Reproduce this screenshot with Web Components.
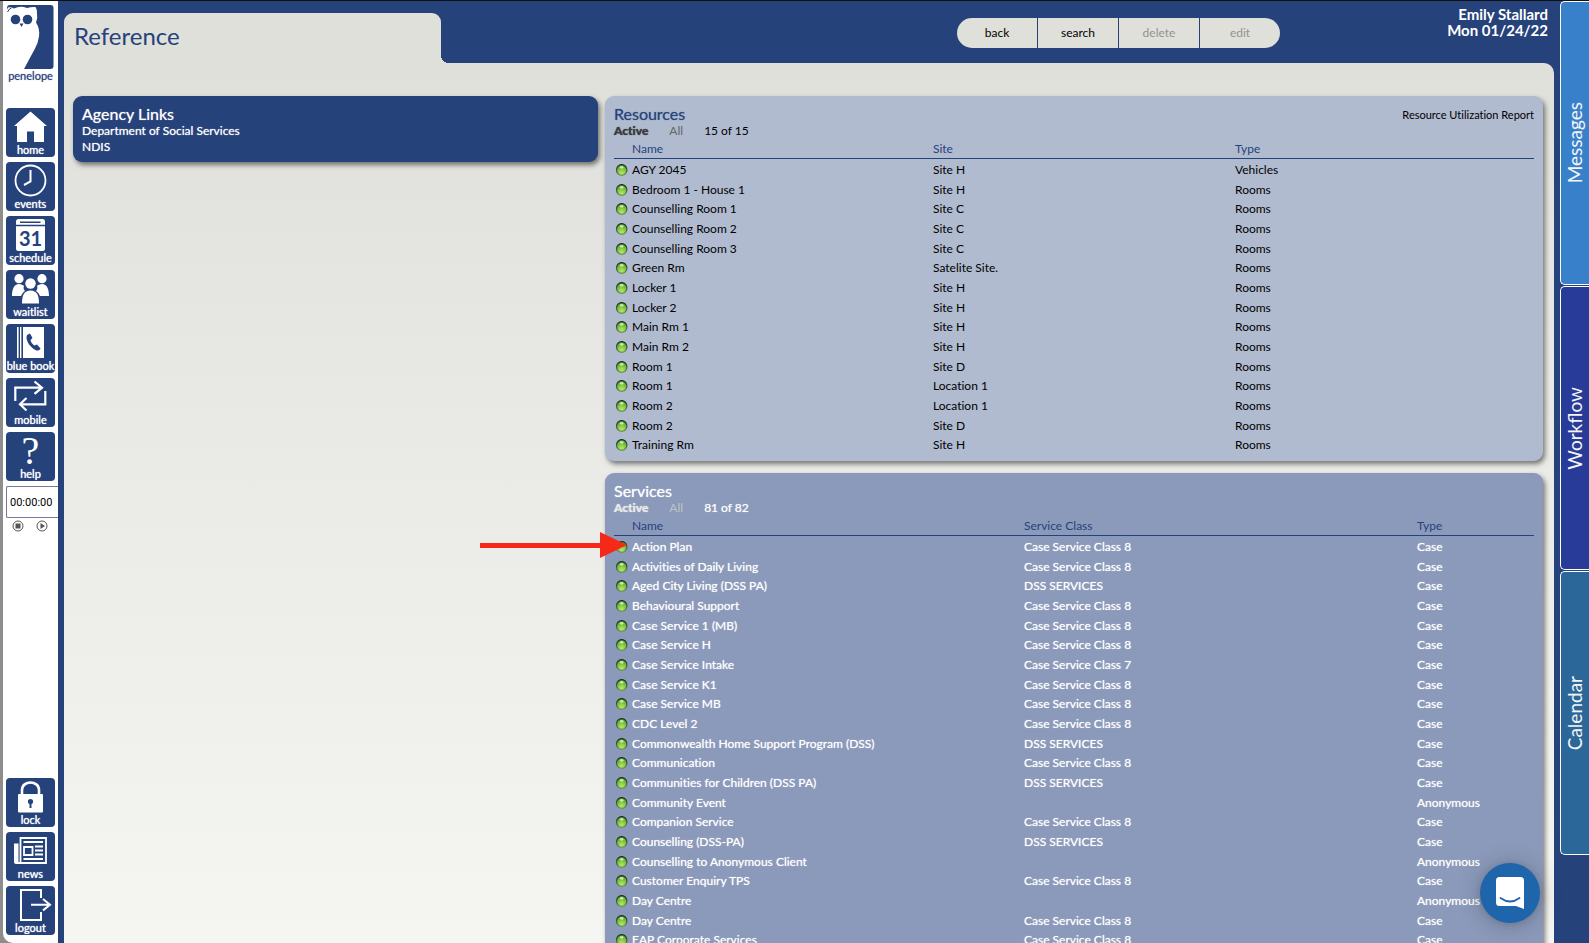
<!DOCTYPE html>
<html lang="en">
<head>
<meta charset="utf-8">
<title>Penelope - Reference</title>
<style>
  html, body { margin: 0; height: 100%; }
  body { overflow: hidden; background: #26427a; font-family: Lato, "Liberation Sans", sans-serif; font-size: 12px; line-height: 16px; color: #000; font-variant-ligatures: none; }
</style>
</head>
<body>
<penelope-app></penelope-app>

<script>
const define = (name, html, setup) => {
  const template = document.createElement('template');
  template.innerHTML = html;
  customElements.define(name, class extends HTMLElement {
    connectedCallback() {
      if (this.shadowRoot) return;
      this.attachShadow({ mode: 'open' }).append(template.content.cloneNode(true));
      if (setup) setup(this, this.shadowRoot);
    }
  });
};

const icons = {
  home: '<path fill="#fff" d="M24.5 3.5 41 18h-3v16H28V23.500h-7V34H11V18H8z"/>',
  events: '<circle cx="24.500" cy="18.500" r="15" fill="none" stroke="#fff" stroke-width="1.800"/><path fill="none" stroke="#fff" stroke-width="2" d="M24.500 8v11.500L18 23"/>',
  schedule: '<rect x="10" y="3" width="29" height="32" rx="2.500" fill="#fff"/><path stroke="#26427a" stroke-width="1.600" d="M14 6.300h20.500M10 9.500h29"/><text x="24.500" y="30" text-anchor="middle" font-size="20" font-weight="700" fill="#26427a">31</text>',
  waitlist: '<g fill="#fff"><circle cx="13" cy="8.700" r="4.600"/><circle cx="36" cy="8.700" r="4.600"/><path d="M6 26c0-7 2-12 7-12 2 0 4 1 5 2-1 2 0 4 1 5-2 1-3 3-4 5zM43 26c0-7-2-12-7-12-2 0-4 1-5 2 1 2 0 4-1 5 2 1 3 3 4 5z"/><circle cx="24.500" cy="13.500" r="5.200"/><path d="M16 33.500c0-8 2-13 8.500-13s8.500 5 8.500 13z"/></g>',
  book: '<g fill="#fff"><path d="M11 3h1.600v31H11zM14 3h1.400v31H14zM17 3h21v31H17z"/></g><path fill="#26427a" d="m21 11 3-1.500 2.500 4.500-2 2c.5 2.500 2 4.500 4 5.500l2.500-1 3.500 4c-1 2-3 2.700-5 1.500-5-2.500-9-8-9-13z"/>',
  mobile: '<path fill="none" stroke="#fff" stroke-width="2.200" d="M9.300 23V9.700H36M28.500 3.500l7.500 6.200-7.500 6.200M39.300 13v13.300H14M20.500 20 14 26.300l6.500 6.200"/>',
  help: '<text x="24.500" y="32" text-anchor="middle" font-family="Liberation Serif, serif" font-size="40" fill="#fff">?</text>',
  lock: '<path fill="none" stroke="#fff" stroke-width="2.600" d="M16 17v-5c0-10 17-10 17 0v5"/><rect x="12" y="16" width="25" height="18.500" rx="1" fill="#fff"/><circle cx="24.500" cy="23.500" r="2.600" fill="#26427a"/><path fill="#26427a" d="M23.500 24h2v6h-2z"/>',
  news: '<path fill="none" stroke="#fff" stroke-width="1.800" d="M14.500 6h25.500v25H14.500z"/><path fill="#fff" d="M8 11.500h4.500V32H10q-2 0-2-2zM10 30h30v2H10z"/><path fill="none" stroke="#fff" stroke-width="1.800" d="M17.500 10h19.500M29 14.500h8M29 18.500h8M29 22.500h8M17.500 27h19.500M18 15h8.500v8H18z"/>',
  logout: '<path fill="none" stroke="#fff" stroke-width="2" d="M35 12V4H15v30h20v-8M25 18.700h18M37 13l7 5.700-7 5.700"/>'
};

/* One square button of the left rail. */
define('nav-tile', `
<style>
  :host { display: block; }
  button { display: grid; width: 49px; height: 49px; padding: 0; border: 0; border-radius: 4px; background: #26427a; color: #fff; font: 11px/14px Lato, sans-serif; }
  svg, span { grid-area: 1 / 1; }
  svg { width: 49px; height: 49px; }
  span { align-self: end; justify-self: center; white-space: nowrap; text-shadow: 0 0 1px #fff; }
</style>
<button type="button"><svg viewBox="0 0 49 49" aria-hidden="true"></svg><span><slot></slot></span></button>`,
(host, root) => { root.querySelector('svg').innerHTML = icons[host.getAttribute('icon')]; });

define('side-rail', `
<style>
  :host { display: flex; flex-direction: column; box-sizing: border-box; width: 55px; padding: 4px 0 8px 3px; gap: 5px; background: #fff; border-radius: 0 0 0 10px; }
  .logo { height: 98px; color: #26427a; text-align: center; line-height: 14px; font-size: 11px; text-shadow: 0 0 1px rgba(38,66,122,.6); }
  .logo svg { display: block; width: 49px; height: 64px; }
  .logo a { display: block; width: 49px; color: inherit; text-decoration: none; }
  .timer { margin-bottom: auto; }
  input { display: block; box-sizing: border-box; width: 52px; height: 32px; padding: 0 0 0 3px; border: 1px solid #77779a; border-right: 0; border-radius: 2px 0 0 2px; font: 11px/16px Roboto, sans-serif; color: #000; background: #fff; }
  .keys { display: flex; gap: 12px; padding: 2px 6px; }
  .keys button { width: 12px; height: 12px; padding: 0; border: 0; background: none; }
  .keys svg { display: block; width: 12px; height: 12px; }
</style>
<div class="logo"><a href="#">
  <svg viewBox="0 0 49 64" aria-hidden="true">
    <rect x="1" width="46.500" height="64" rx="3" fill="#26427a"/>
    <path fill="#fff" d="M0 7 2 2.500q3-.8 6 1 6-3 13-.5 5-1.500 8.500-1 2 3 1.500 6.500 1 5-1 9 4 6 3 14-1 7-4 12L18 64H0z"/>
    <circle cx="9.500" cy="14.500" r="4.800" fill="#26427a"/><circle cx="21.500" cy="14.500" r="4.800" fill="#26427a"/>
    <path fill="#26427a" d="M13.500 18.500h4l-2 3.500z"/>
    <path fill="none" stroke="#26427a" d="M1.500 7q2-4 4-4"/>
  </svg>penelope</a></div>
<nav-tile icon="home">home</nav-tile>
<nav-tile icon="events">events</nav-tile>
<nav-tile icon="schedule">schedule</nav-tile>
<nav-tile icon="waitlist">waitlist</nav-tile>
<nav-tile icon="book">blue book</nav-tile>
<nav-tile icon="mobile">mobile</nav-tile>
<nav-tile icon="help">help</nav-tile>
<div class="timer">
  <input type="text" value="00:00:00" aria-label="Timer">
  <div class="keys">
    <button type="button" aria-label="Stop"><svg viewBox="0 0 12 12"><circle cx="6" cy="6" r="5" fill="none" stroke="#555"/><path fill="#555" d="M3.500 3.500h5v5h-5z"/></svg></button>
    <button type="button" aria-label="Start"><svg viewBox="0 0 12 12"><circle cx="6" cy="6" r="5" fill="none" stroke="#555"/><path fill="#555" d="m4.500 3 4.500 3-4.500 3z"/></svg></button>
  </div>
</div>
<nav-tile icon="lock">lock</nav-tile>
<nav-tile icon="news">news</nav-tile>
<nav-tile icon="logout">logout</nav-tile>`);

define('page-header', `
<style>
  :host { display: flex; height: 62px; color: #fff; }
  .tab { position: relative; box-sizing: border-box; flex: 0 0 377px; margin-top: 12px; padding: 7px 10px; background: #dfe0da; border-radius: 9px 9px 0 0; }
  .tab::after { content: ""; position: absolute; left: 100%; bottom: 0; width: 8px; height: 8px; background: radial-gradient(circle at 100% 0, #26427a 8px, #dfe0da 8px); }
  h1 { margin: 0; color: #26427a; font-weight: 400; font-size: 24px; line-height: 32px; }
  .actions { display: flex; gap: 1px; margin: 17px 0 0 auto; height: 30px; border-radius: 15px; overflow: hidden; }
  button { width: 80px; padding: 0; border: 0; background: #dfe0da; color: #000; font: 12px/16px Lato, sans-serif; }
  button:disabled { color: #92938f; }
  .user { flex: 0 0 268px; padding: 5px 0; text-align: right; font-size: 15px; line-height: 16px; font-weight: 700; margin-right: 6px; }
</style>
<div class="tab"><h1>Reference</h1></div>
<div class="actions">
  <button type="button">back</button><button type="button">search</button><button type="button" disabled>delete</button><button type="button" disabled>edit</button>
</div>
<div class="user">Emily Stallard<br>Mon 01/24/22</div>`);

/* Rounded panel with a heading, an optional link on the right, and its content. */
define('info-card', `
<style>
  :host { display: block; box-sizing: border-box; padding: 9px 9px 7px; border-radius: 9px; background: #26427a; color: #fff; box-shadow: 2px 3px 5px rgba(0,0,0,.5); text-shadow: 0 0 1px rgba(255,255,255,.7); }
  :host([tone="light"]) { background: #b0bbd0; color: #000; padding-bottom: 6px; text-shadow: none; }
  :host([tone="mid"]) { background: #8b9aba; }
  header { display: flex; justify-content: space-between; align-items: flex-end; line-height: 16px; font-size: 11px; }
  h2 { margin: 0; font-size: 16px; line-height: 18px; font-weight: 400; }
  :host([tone="light"]) h2 { color: #26427a; text-shadow: 0 0 1px rgba(38,66,122,.6); }
</style>
<header><h2><slot name="title"></slot></h2><slot name="aside"></slot></header>
<slot></slot>`);

define('link-list', `
<style>
  ul { margin: 0; padding: 0; list-style: none; }
  a { color: inherit; text-decoration: none; }
</style>
<ul><li><a href="#">Department of Social Services</a></li><li><a href="#">NDIS</a></li></ul>`);

define('status-dot', `
<style>
  :host { display: block; width: 12px; height: 12px; }
  svg { display: block; }
</style>
<svg width="12" height="12" viewBox="0 0 12 12" role="img" aria-label="Active">
  <defs><radialGradient id="g" cx=".5" cy=".8" r=".7"><stop offset="0" stop-color="#b4ec5e"/><stop offset=".6" stop-color="#7cc440"/><stop offset="1" stop-color="#4f9a2e"/></radialGradient>
  <linearGradient id="r" x2="0" y2="1"><stop offset="0" stop-color="#152611"/><stop offset="1" stop-color="#6f8d68"/></linearGradient></defs>
  <ellipse cx="5.700" cy="6" rx="5.200" ry="5.400" fill="url(#g)" stroke="url(#r)" stroke-width="1.200"/>
  <ellipse cx="5.700" cy="3.300" rx="1.800" ry="1.400" fill="#e0f7c8" opacity=".8"/>
</svg>`);

const data = {
  resources: {
    count: '15 of 15', head: ['Name', 'Site', 'Type'], widths: ['301px', '302px', 'auto'],
    rows: `AGY 2045|Site H|Vehicles
Bedroom 1 - House 1|Site H|Rooms
Counselling Room 1|Site C|Rooms
Counselling Room 2|Site C|Rooms
Counselling Room 3|Site C|Rooms
Green Rm|Satelite Site.|Rooms
Locker 1|Site H|Rooms
Locker 2|Site H|Rooms
Main Rm 1|Site H|Rooms
Main Rm 2|Site H|Rooms
Room 1|Site D|Rooms
Room 1|Location 1|Rooms
Room 2|Location 1|Rooms
Room 2|Site D|Rooms
Training Rm|Site H|Rooms`
  },
  services: {
    count: '81 of 82', head: ['Name', 'Service Class', 'Type'], widths: ['392px', '393px', 'auto'],
    rows: `Action Plan|Case Service Class 8|Case
Activities of Daily Living|Case Service Class 8|Case
Aged City Living (DSS PA)|DSS SERVICES|Case
Behavioural Support|Case Service Class 8|Case
Case Service 1 (MB)|Case Service Class 8|Case
Case Service H|Case Service Class 8|Case
Case Service Intake|Case Service Class 7|Case
Case Service K1|Case Service Class 8|Case
Case Service MB|Case Service Class 8|Case
CDC Level 2|Case Service Class 8|Case
Commonwealth Home Support Program (DSS)|DSS SERVICES|Case
Communication|Case Service Class 8|Case
Communities for Children (DSS PA)|DSS SERVICES|Case
Community Event||Anonymous
Companion Service|Case Service Class 8|Case
Counselling (DSS-PA)|DSS SERVICES|Case
Counselling to Anonymous Client||Anonymous
Customer Enquiry TPS|Case Service Class 8|Case
Day Centre||Anonymous
Day Centre|Case Service Class 8|Case
EAP Corporate Services|Case Service Class 8|Case`
  }
};

define('record-table', `
<style>
  :host { display: block; --active: #3c3c3c; --all: #666; }
  :host([kind="services"]) { --active: #e8e8e8; --all: #c0c2c4; }
  .filter { display: flex; line-height: 16px; }
  button { padding: 0; border: 0; background: none; font: inherit; color: var(--all); text-align: left; margin-right: 21px; text-shadow: none; }
  button[aria-pressed="true"] { font-weight: 900; color: var(--active); text-shadow: 0 0 1px var(--active); }
  table { width: 100%; table-layout: fixed; border-collapse: collapse; }
  th, td { padding: 0; text-align: left; white-space: nowrap; vertical-align: top; }
  th { height: 19px; box-sizing: border-box; padding-top: 2px; line-height: 16px; font-weight: 400; color: #26427a; text-shadow: none; border-bottom: 1px solid #26427a; }
  tbody::before { content: ""; display: table-row; height: 2px; }
  td { height: 20px; line-height: 19px; }
  tr:nth-child(3n+2) td { height: 19px; }
  a { color: inherit; text-decoration: none; }
  status-dot { margin: 4px 0 0 2px; }
</style>
<div class="filter"><button type="button" aria-pressed="true">Active</button><button type="button" aria-pressed="false">All</button><span></span></div>
<table><colgroup><col style="width:18px"></colgroup><thead><tr><th></th></tr></thead><tbody></tbody></table>`,
(host, root) => {
  const set = data[host.getAttribute('kind')];
  root.querySelector('span').textContent = set.count;
  root.querySelector('colgroup').insertAdjacentHTML('beforeend', set.widths.map(w => `<col style="width:${w}">`).join(''));
  root.querySelector('thead tr').insertAdjacentHTML('beforeend', set.head.map(h => `<th scope="col">${h}</th>`).join(''));
  root.querySelector('tbody').innerHTML = set.rows.split('\n').map(line => {
    const [name, group, type] = line.split('|');
    return `<tr><td><status-dot></status-dot></td><td><a href="#">${name}</a></td><td>${group}</td><td>${type}</td></tr>`;
  }).join('');
});

define('side-tabs', `
<style>
  :host { display: flex; flex-direction: column; width: 29px; }
  button { box-sizing: border-box; height: 284px; margin-bottom: 1px; width: 29px; padding: 0; border: 1px solid #fff; border-right: 0; border-radius: 5px 0 0 5px; color: #f2f4f6; font: 400 19px/28px Lato, sans-serif; background: #3980cb; }
  button:nth-of-type(2) { background: #283b98; }
  button:nth-of-type(3) { background: #2c6799; }
  span { display: block; margin: auto; writing-mode: vertical-rl; transform: rotate(180deg); }
</style>
<button type="button"><span>Messages</span></button><button type="button"><span>Workflow</span></button><button type="button"><span>Calendar</span></button>`);

define('chat-launcher', `
<style>
  :host { position: absolute; right: 49px; bottom: 20px; }
  button { display: block; width: 60px; height: 60px; padding: 0; border: 0; border-radius: 50%; background: #1f65ab; box-shadow: 0 1px 6px rgba(0,0,0,.12), 0 2px 24px rgba(0,0,0,.22); }
  svg { display: block; }
</style>
<button type="button" aria-label="Open chat"><svg width="60" height="60" viewBox="0 0 60 60"><path fill="#fff" d="M19.500 14h21q3.500 0 3.500 3.500V46l-8-3H19.500q-3.500 0-3.500-3.500v-22q0-3.500 3.500-3.500z"/><path fill="none" stroke="#1f65ab" stroke-width="1.800" stroke-linecap="round" d="M20.500 35q9.500 7 19 0"/></svg></button>`);

/* Red callout arrow lying over the first service row. */
define('callout-arrow', `
<style>
  :host { position: absolute; left: 480px; top: 531px; pointer-events: none; }
  svg { display: block; }
</style>
<svg width="148" height="27" viewBox="0 0 148 27" aria-hidden="true"><path fill="#f62817" d="M0 11h120V0l27 13-27 13V16H0z"/></svg>`);

define('penelope-app', `
<style>
  :host { position: relative; display: flex; box-sizing: border-box; height: 100vh; overflow: hidden; padding-left: 3px; border-top: 1px solid #111; background: linear-gradient(90deg, #8d8d8d 13px, #26427a 13px); }
  .page { flex: 1; min-width: 0; display: flex; flex-direction: column; margin: 0 6px; background: #26427a; }
  main { flex: 1; min-height: 0; display: flex; gap: 7px; align-items: flex-start; box-sizing: border-box; padding: 33px 11px 0 9px; border-radius: 0 10px 0 0; overflow: hidden; background: linear-gradient(#dfe0da, #ebebe8 50%, #f5f5f2); }
  .left { flex: 0 0 525px; }
  .right { flex: 1; display: flex; flex-direction: column; gap: 12px; min-width: 0; }
  a { color: inherit; text-decoration: none; }
</style>
<side-rail></side-rail>
<div class="page">
  <page-header></page-header>
  <main>
    <info-card class="left"><span slot="title">Agency Links</span><link-list></link-list></info-card>
    <div class="right">
      <info-card tone="light"><span slot="title">Resources</span><a slot="aside" href="#">Resource Utilization Report</a><record-table kind="resources"></record-table></info-card>
      <info-card tone="mid"><span slot="title">Services</span><record-table kind="services"></record-table></info-card>
    </div>
  </main>
</div>
<side-tabs></side-tabs>
<callout-arrow></callout-arrow>
<chat-launcher></chat-launcher>`);
</script>
</body>
</html>
